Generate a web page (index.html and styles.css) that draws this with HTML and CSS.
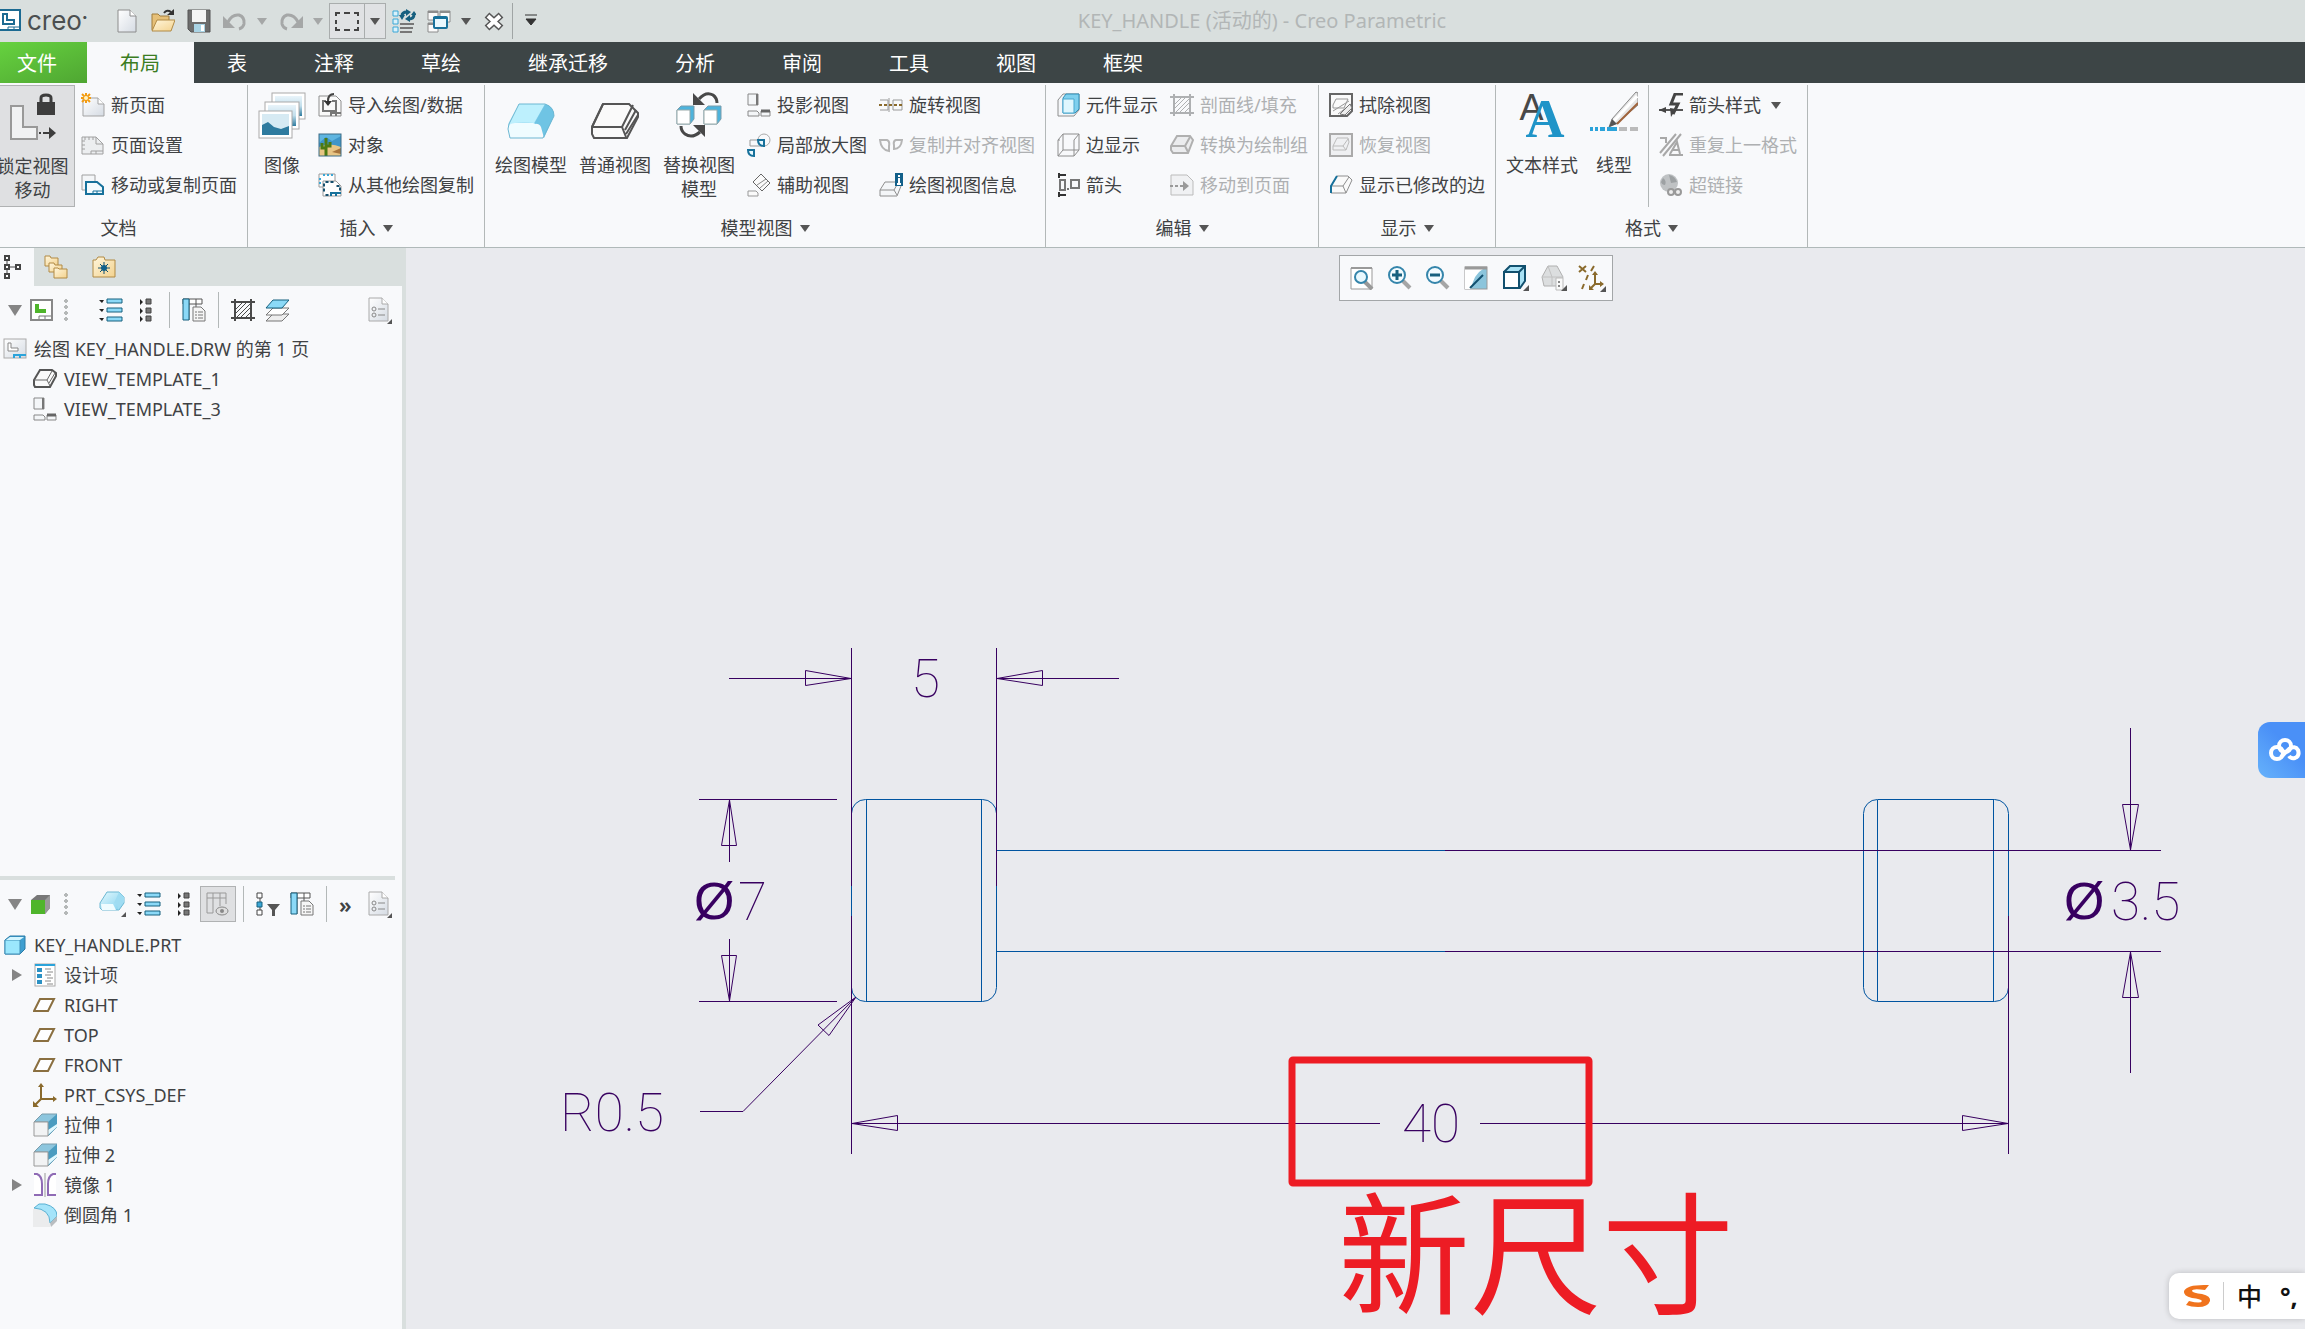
FILE: index.html
```html
<!DOCTYPE html>
<html lang="zh-CN">

<head>
    <meta charset="UTF-8">
    <meta name="viewport" content="width=device-width, initial-scale=1.0">
    <title>KEY_HANDLE (活动的) - Creo Parametric</title>
    <link rel="stylesheet" href="styles.css">
</head>

<body>
    <!-- icon sprite -->
    <svg class="sprite" aria-hidden="true">
        <defs>
            <linearGradient id="gBlue" x1="0" y1="0" x2="1" y2="1">
                <stop offset="0" stop-color="#e4f9fe" />
                <stop offset="1" stop-color="#7fd0ee" />
            </linearGradient>
            <linearGradient id="gGrey" x1="0" y1="0" x2="1" y2="1">
                <stop offset="0" stop-color="#ffffff" />
                <stop offset="1" stop-color="#d5dbe3" />
            </linearGradient>
            <linearGradient id="gFold" x1="0" y1="0" x2="1" y2="1">
                <stop offset="0" stop-color="#fff6dc" />
                <stop offset="1" stop-color="#f3d28e" />
            </linearGradient>
            <linearGradient id="gSea" x1="0" y1="0" x2="0" y2="1">
                <stop offset="0" stop-color="#e9f4fa" />
                <stop offset="0.5" stop-color="#c3dfec" />
                <stop offset="1" stop-color="#2e7b9f" />
            </linearGradient>
        </defs>

        <symbol id="i-app" viewBox="0 0 24 24">
            <path d="M-4 1H20V21H-4z" fill="#fff" stroke="#1c6a92" stroke-width="2" />
            <path d="M3 5H7V11H14V15H3z" fill="#fff" stroke="#1c6a92" stroke-width="2" />
            <path d="M8 21V18H20M14 18V21" fill="none" stroke="#1c6a92" />
        </symbol>
        <symbol id="i-new" viewBox="0 0 24 24">
            <path d="M3 1H15L21 7V23H3z" fill="url(#gGrey)" stroke="#8c8c8c" />
            <path d="M15 1V7H21" fill="#fff" stroke="#8c8c8c" />
        </symbol>
        <symbol id="i-open" viewBox="0 0 24 24">
            <path d="M1 21V5H7L9 7H18V11" fill="#e6c078" stroke="#a07c3c" />
            <path d="M1 22L6 11H24L20 22z" fill="url(#gFold)" stroke="#b18a45" />
            <path d="M13 4Q16 0 20 3" fill="none" stroke="#333" stroke-width="2" />
            <path d="M23 0V6H16z" fill="#333" />
        </symbol>
        <symbol id="i-save" viewBox="0 0 24 24">
            <path d="M1 1H23V23H4L1 20z" fill="#6c6c6c" stroke="#555" />
            <path d="M5 1H19V13H5z" fill="#f4f4f4" />
            <path d="M7 15H18V23H7z" fill="#a9d3e4" />
            <path d="M14 16H17V22H14z" fill="#fff" />
        </symbol>
        <symbol id="i-undo" viewBox="0 0 24 24">
            <path d="M5 13Q9 5 16 6Q22 8 21 15Q20 19 16 20" fill="none" stroke="#a5a7a7" stroke-width="3" />
            <path d="M0 7V19H12z" fill="#a5a7a7" />
        </symbol>
        <symbol id="i-redo" viewBox="0 0 24 24">
            <path d="M19 13Q15 5 8 6Q2 8 3 15Q4 19 8 20" fill="none" stroke="#a5a7a7" stroke-width="3" />
            <path d="M24 7V19H12z" fill="#a5a7a7" />
        </symbol>
        <symbol id="i-select" viewBox="0 0 24 24">
            <path d="M1 7V4H5M9 4H15M19 4H23V7M23 11V15M23 18V21H19M15 21H9M5 21H1V18M1 15V11" fill="none" stroke="#444" stroke-width="2" />
        </symbol>
        <symbol id="i-regen" viewBox="0 0 24 24">
            <path d="M1 2H6V7H1zM1 10H6V15H1zM1 18H6V23H1z" fill="#d9f1fb" stroke="#3ba7d6" stroke-width="1" />
            <path d="M8 15H22M8 19H21M8 23H20" stroke="#777" stroke-width="2" />
            <path d="M10 7Q10 3 15 3M22 5Q22 10 17 10" fill="none" stroke="#17607f" stroke-width="3" />
            <path d="M14 0V7L19 3zM18 6V13L13 10zM7 6H13L10 11zM19 6H25L22 2z" fill="#17607f" />
        </symbol>
        <symbol id="i-windows" viewBox="0 0 24 24">
            <path d="M1 2H11V11H1zM13 2H23V13H13zM1 14H11V23H1z" fill="#fafafa" stroke="#8c8c8c" />
            <path d="M1 3H11M13 3H23M1 15H11" stroke="#8c8c8c" stroke-width="2" />
            <rect x="7" y="8" width="13" height="11" rx="1" fill="#e8f8fe" stroke="#17719b" stroke-width="2" />
            <path d="M6 9H20" stroke="#17719b" stroke-width="2" />
        </symbol>
        <symbol id="i-close" viewBox="0 0 24 24">
            <path d="M5 6L19 19M19 6L5 19" stroke="#555" stroke-width="7" />
            <path d="M6 7L18 18M18 7L6 18" stroke="#fff" stroke-width="4" />
        </symbol>
        <symbol id="i-custom" viewBox="0 0 16 16">
            <path d="M2 2H14M3 6H13L8 12z" fill="#333" stroke="#333" stroke-width="1" />
        </symbol>

        <symbol id="i-lock" viewBox="2 0 48 48">
            <path d="M4 14H16V35H30V47H4z" fill="#f1f2f3" stroke="#999" stroke-width="2" />
            <path d="M30 10H48V23H30z" fill="#3d3d3d" />
            <path d="M34 11V6Q34 3 39 3Q44 3 44 6V11" fill="none" stroke="#3d3d3d" stroke-width="3" />
            <path d="M32 41H34M36 41H44" stroke="#3d3d3d" stroke-width="2" />
            <path d="M42 35L49 41L42 47z" fill="#3d3d3d" />
        </symbol>
        <symbol id="i-newpage" viewBox="0 0 24 24">
            <path d="M2 5H17L23 11V23H2z" fill="url(#gGrey)" stroke="#a3a3a3" />
            <path d="M17 5V11H23" fill="#fff" stroke="#a3a3a3" />
            <path d="M5 0V10M0 5H10M1 1L9 9M9 1L1 9" stroke="#f39c12" stroke-width="2" />
            <circle cx="5" cy="5" r="2" fill="#fff3c4" />
        </symbol>
        <symbol id="i-pageset" viewBox="0 0 24 24">
            <path d="M1 4H15L22 11V21H1z" fill="#eceef0" stroke="#a0a0a0" />
            <path d="M15 4V11H22M4 4V7M8 4V7M12 4V7M1 8H4M1 12H4M1 16H4M10 21V18H22M15 18V21" fill="none" stroke="#a0a0a0" />
        </symbol>
        <symbol id="i-movepage" viewBox="0 0 24 24">
            <path d="M1 2H14V17H1z" fill="#f4f6f8" stroke="#a0a0a0" />
            <path d="M5 9H16L22 14V21H5z" fill="#f4fbfe" stroke="#17719b" stroke-width="2" />
            <path d="M12 21V18H22M16 18V21" fill="none" stroke="#17719b" />
        </symbol>
        <symbol id="i-images" viewBox="0 0 48 48">
            <rect x="14" y="2" width="33" height="26" fill="#fff" stroke="#aaa" />
            <rect x="17" y="5" width="27" height="20" fill="url(#gSea)" />
            <rect x="7" y="11" width="34" height="27" fill="#fff" stroke="#aaa" />
            <rect x="10" y="14" width="28" height="21" fill="url(#gSea)" />
            <rect x="1" y="20" width="33" height="27" fill="#fff" stroke="#aaa" />
            <rect x="4" y="23" width="27" height="21" fill="#d6eaf3" />
            <path d="M4 34L10 31L16 36L23 38L31 35V44H4z" fill="#2e7b9f" />
        </symbol>
        <symbol id="i-import" viewBox="0 0 24 24">
            <path d="M1 3H18L23 8V23H1z" fill="#fafafa" stroke="#8e8e8e" />
            <path d="M8 8H5V18H18V8H14M13 23V20H23M18 20V23" fill="none" stroke="#777" stroke-width="2" />
            <path d="M16 1Q10 1 10 8" fill="none" stroke="#444" stroke-width="2" />
            <path d="M6 8H14L10 13z" fill="#333" />
        </symbol>
        <symbol id="i-cactus" viewBox="0 0 24 24">
            <rect x="1" y="1" width="22" height="22" fill="#5fb5e0" />
            <path d="M1 10L8 4L14 8L23 3V14H1z" fill="#3f95c8" />
            <path d="M1 14Q12 9 23 14V23H1z" fill="#e8c584" />
            <path d="M14 19L23 15V21z" fill="#a7743c" />
            <path d="M8 23V5M8 15H4V10M8 13H12V9" fill="none" stroke="#4c7a12" stroke-width="3" />
            <rect x="1" y="1" width="22" height="22" fill="none" stroke="#3c6c86" />
        </symbol>
        <symbol id="i-copydraw" viewBox="0 0 24 24">
            <path d="M1 1H17V14H1z" fill="#fff" stroke="#9a9a9a" />
            <path d="M1 6H3M1 10H3M6 1V3M10 1V3M14 1V3" stroke="#3ba7d6" stroke-width="2" />
            <path d="M5 8H18L23 13V23H5z" fill="#fff" stroke="#9a9a9a" />
            <path d="M5 12H7M5 17H7M9 8V10M14 8V10M20 12V14M9 23V21M21 16H23" stroke="#17506e" stroke-width="3" />
            <path d="M13 23V20H23M18 20V23" fill="none" stroke="#17719b" stroke-width="2" />
        </symbol>
        <symbol id="i-model" viewBox="0 0 48 48">
            <path d="M12 13H38L28 35H3Q0 36 2 31z" fill="url(#gBlue)" />
            <path d="M12 13H38L27 32Q8 30 2 34z" fill="#bdf0fd" />
            <path d="M38 13Q47 15 47 25L37 47L34 36Q32 32 27 33z" fill="#6fc4e4" />
            <path d="M1 38Q1 32 8 32H26Q35 34 34 47H3z" fill="#effcff" />
            <path d="M12 13H38Q47 16 47 25L36 47H3L1 38L2 33z" fill="none" stroke="#6cb7d2" stroke-width="1" />
        </symbol>
        <symbol id="i-general" viewBox="0 0 48 48">
            <path d="M12 13H38L47 22V26L36 47H3L1 43V36z" fill="#fafafa" stroke="#555" stroke-width="2" />
            <path d="M1 36H31L35 46M31 36L42 14M35 43L47 24M34 39L45 19M12 13L1 36" fill="none" stroke="#555" stroke-width="2" />
        </symbol>
        <symbol id="i-replace" viewBox="0 0 48 48">
            <path d="M2 19L6 15H19V28L15 33H2z" fill="#4db3dc" stroke="#7a9cab" />
            <path d="M2 19H15V33H2z" fill="#fff" stroke="#9aa" />
            <path d="M29 19L33 15H46V28L42 33H29z" fill="#4db3dc" stroke="#7a9cab" />
            <path d="M29 19H42V33H29z" fill="#fff" stroke="#9aa" />
            <path d="M24 8Q31 0 38 4Q42 7 42 12M25 41Q17 48 10 43Q6 40 6 35" fill="none" stroke="#484848" stroke-width="3" />
            <path d="M18 2V14H30zM30 46V34H18z" fill="#484848" />
        </symbol>
        <symbol id="i-proj" viewBox="0 0 24 24">
            <path d="M1 1H11V12H1z" fill="#f4f6f8" stroke="#888" stroke-width="1" />
            <path d="M10 1V12" stroke="#777" stroke-width="2" />
            <path d="M1 18H10L12 20V23H1zM14 18H23V23H14z" fill="#f4f6f8" stroke="#888" />
            <path d="M14 18H23" stroke="#666" stroke-width="3" />
        </symbol>
        <symbol id="i-detail" viewBox="0 0 24 24">
            <circle cx="17" cy="7" r="6" fill="none" stroke="#aaa" />
            <path d="M3 7H15V13H3z" fill="none" stroke="#999" />
            <path d="M11 7H17V13Q11 13 11 7z" fill="#e8f8fe" stroke="#17719b" stroke-width="2" />
            <path d="M1 17H7V23Q1 23 1 17z" fill="#e8f8fe" stroke="#17719b" stroke-width="2" />
        </symbol>
        <symbol id="i-aux" viewBox="0 0 24 24">
            <path d="M14 1L23 10L15 18L6 9z" fill="#fafafa" stroke="#666" />
            <path d="M10 12L19 6M13 15L21 8" stroke="#888" />
            <path d="M1 18H9L11 20V23H1z" fill="#fafafa" stroke="#999" />
        </symbol>
        <symbol id="i-revolve" viewBox="0 0 24 24">
            <path d="M1 7H9V17H1M10 5V19M14 7H23V17H14z" fill="none" stroke="#999" />
            <path d="M0 12H24" stroke="#8a6a2c" stroke-width="2" stroke-dasharray="3 2" />
        </symbol>
        <symbol id="i-align" viewBox="0 0 24 24">
            <path d="M1 7H8Q11 8 10 13V18Q2 17 1 7zM23 7H17Q14 8 15 12V16Q22 16 23 7z" fill="none" stroke="#b5b5b5" stroke-width="2" />
        </symbol>
        <symbol id="i-info" viewBox="0 0 24 24">
            <path d="M6 9H20L22 13L18 23H1V17z" fill="#f4f6f8" stroke="#8e8e8e" />
            <path d="M1 17H15L18 22M15 17L19 10" fill="none" stroke="#8e8e8e" />
            <path d="M16 0H24V13H16z" fill="#12608a" />
            <path d="M20 2V4M19 6H20V11M18 11H22" fill="none" stroke="#fff" stroke-width="2" />
        </symbol>
        <symbol id="i-compdisp" viewBox="0 0 24 24">
            <path d="M2 7L7 1H23V17L18 23H2z" fill="#f4f6f8" stroke="#8e8e8e" />
            <path d="M7 5L10 1H23V16L19 20H7z" fill="#7fd0ee" stroke="#2e8fb8" />
            <path d="M7 6H18V20H7z" fill="#dff7fe" stroke="#4aa9d0" />
        </symbol>
        <symbol id="i-edge" viewBox="0 0 24 24">
            <path d="M2 7L7 1H23V17L18 23H2zM7 1V17H23M7 17L2 23M18 23V7L23 1M2 7H4" fill="none" stroke="#8e8e8e" />
        </symbol>
        <symbol id="i-arrows" viewBox="0 0 24 24">
            <path d="M3 2H10M3 22H10M3 0V5M3 19V24" stroke="#333" stroke-width="2" />
            <path d="M4 7H9V17H4zM15 7H23V15H15z" fill="none" stroke="#777" stroke-width="2" />
            <path d="M11 16H13" stroke="#777" stroke-width="2" />
        </symbol>
        <symbol id="i-hatch" viewBox="0 0 24 24">
            <path d="M4 1V23M20 1V23M0 4H24M0 20H24" stroke="currentColor" stroke-width="2" />
            <path d="M5 11L11 5M5 15L15 5M6 19L19 6M10 19L19 10M15 19L19 15" stroke="currentColor" />
        </symbol>
        <symbol id="i-convert" viewBox="0 0 24 24">
            <path d="M7 3H20L23 7L18 20H3L1 17V13z" fill="#ebecee" stroke="#b0b0b0" stroke-width="2" />
            <path d="M1 13H15L18 19M15 13L20 4" fill="none" stroke="#b0b0b0" stroke-width="2" />
        </symbol>
        <symbol id="i-topage" viewBox="0 0 24 24">
            <path d="M1 2H17L23 8V22H1z" fill="#f0f1f3" stroke="#bbb" />
            <path d="M0 13H3M5 13H8M10 13H16" stroke="#999" stroke-width="2" />
            <path d="M13 8L19 13L13 18z" fill="#999" />
        </symbol>
        <symbol id="i-erase" viewBox="0 0 24 24">
            <path d="M1 1H23V18L18 23H1z" fill="#fafafa" stroke="#666" stroke-width="2" />
            <path d="M7 6H19L15 15H4V12zM4 18L20 8M9 21L22 11" fill="none" stroke="#999" stroke-width="1" />
            <path d="M11 21L21 11L23 15L16 22z" fill="#eee" stroke="#777" />
        </symbol>
        <symbol id="i-restore" viewBox="0 0 24 24">
            <rect x="1" y="1" width="22" height="22" fill="#eff0f2" stroke="#aaa" stroke-width="2" />
            <path d="M8 5H19L20 9L17 17H4V13zM4 13H14L17 17M14 13L19 6" fill="none" stroke="#bbb" stroke-width="1" />
        </symbol>
        <symbol id="i-moded" viewBox="0 0 24 24">
            <path d="M8 3H19L23 7L17 20H2V13z" fill="#fafafa" stroke="#8e8e8e" />
            <path d="M2 13H14L17 20M14 13L20 4" fill="none" stroke="#8e8e8e" />
            <path d="M8 3L2 13V20" fill="none" stroke="#17719b" stroke-width="2" />
        </symbol>
        <symbol id="i-pen" viewBox="0 0 48 48">
            <path d="M46 1L48 2V14L27 32L19 36L22 28z" fill="#e6e6e6" stroke="#888" />
            <path d="M47 5L24 30" stroke="#fff" stroke-width="3" />
            <path d="M48 12L27 33" stroke="#a0643c" stroke-width="2" />
            <path d="M19 36L22 28L27 33z" fill="#555" />
            <path d="M0 38H3M5 38H8M10 38H15M17 38H27" stroke="#2ba3da" stroke-width="4" />
            <path d="M29 38H37M40 38H48" stroke="#bbb" stroke-width="4" />
        </symbol>
        <symbol id="i-arrstyle" viewBox="0 0 24 24">
            <path d="M0 17H24" stroke="#555" stroke-width="2" />
            <path d="M24 1H16L12 11H19L14 21" fill="none" stroke="#444" stroke-width="3" />
            <path d="M17 16L12 24L11 15z" fill="#444" />
            <path d="M0 17L7 14V20z" fill="#444" />
        </symbol>
        <symbol id="i-repeat" viewBox="0 0 24 24">
            <path d="M4 23L22 1M1 20L17 1M1 5H7V10" fill="none" stroke="#a8a8a8" stroke-width="2" />
            <path d="M11 21L18 9L21 21M13 17H20M10 22H24" fill="none" stroke="#a8a8a8" stroke-width="2" />
        </symbol>
        <symbol id="i-link" viewBox="0 0 24 24">
            <circle cx="10" cy="10" r="9" fill="#bfc2c4" />
            <path d="M4 5Q8 8 6 12Q3 12 2 9zM10 2Q16 3 18 9L12 10z" fill="#9da1a3" />
            <circle cx="12" cy="19" r="3" fill="#eee" stroke="#999" stroke-width="2" />
            <circle cx="19" cy="19" r="3" fill="#eee" stroke="#999" stroke-width="2" />
        </symbol>

        <symbol id="i-refit" viewBox="0 0 24 24">
            <path d="M1 2H22V23H1z" fill="#fff" stroke="#999" />
            <path d="M1 2H22" stroke="#999" stroke-width="2" />
            <path d="M15 16L22 23" stroke="#999" stroke-width="4" />
            <circle cx="11" cy="11" r="6" fill="#e8f8fe" stroke="#3585ab" stroke-width="2" />
        </symbol>
        <symbol id="i-zoomin" viewBox="0 0 24 24">
            <path d="M14 14L22 22" stroke="#a5a5a5" stroke-width="4" />
            <circle cx="9" cy="9" r="8" fill="#f2fbff" stroke="#3585ab" stroke-width="2" />
            <path d="M9 4V14M4 9H14" stroke="#17607f" stroke-width="3" />
        </symbol>
        <symbol id="i-zoomout" viewBox="0 0 24 24">
            <path d="M14 14L22 22" stroke="#a5a5a5" stroke-width="4" />
            <circle cx="9" cy="9" r="8" fill="#f2fbff" stroke="#3585ab" stroke-width="2" />
            <path d="M4 9H14" stroke="#17607f" stroke-width="3" />
        </symbol>
        <symbol id="i-repaint" viewBox="0 0 24 24">
            <rect x="1" y="1" width="22" height="22" fill="#8cc5dc" stroke="#999" />
            <path d="M1 3H19Q10 8 7 23H1z" fill="#fff" />
            <path d="M1 2H23" stroke="#999" stroke-width="3" />
            <path d="M6 22L19 9" stroke="#12506e" stroke-width="2" />
        </symbol>
        <symbol id="i-box" viewBox="0 0 28 28">
            <path d="M2 8L8 2H23V17L18 24H2z" fill="#a9e2f5" stroke="#12506e" stroke-width="2" />
            <path d="M2 8H17V24H2z" fill="#fff" stroke="#12506e" stroke-width="2" />
            <path d="M17 8L23 2" stroke="#12506e" stroke-width="2" />
            <path d="M27 21V27H21z" fill="#555" />
        </symbol>
        <symbol id="i-house" viewBox="0 0 28 28">
            <path d="M2 13L8 2H17L23 13L20 22H4z" fill="#dcdedf" stroke="#b0b0b0" />
            <path d="M8 2L12 13V22M2 13H23" fill="none" stroke="#c2c2c2" />
            <path d="M16 14H23V26H16z" fill="#fafafa" stroke="#bbb" />
            <path d="M19 17V19M19 21V23" stroke="#888" stroke-width="2" />
            <path d="M27 21V27H21z" fill="#555" />
        </symbol>
        <symbol id="i-datum" viewBox="0 0 28 28">
            <path d="M1 2L8 8M8 2L1 8M16 2L13 7M10 11L8 16M6 20L4 25M17 9V20H25M17 20L12 25" fill="none" stroke="#8a6a2c" stroke-width="2" />
            <path d="M14 11L17 7L20 11zM22 17L26 20L22 23zM11 21V26H16z" fill="#8a6a2c" />
            <path d="M28 22V28H22z" fill="#555" />
        </symbol>

        <symbol id="i-treetab" viewBox="0 0 24 24">
            <path d="M4 6V19M6 12H14" stroke="#444" />
            <path d="M2 1H6V5H2zM2 10H6V14H2zM2 19H6V23H2zM13 10H17V14H13z" fill="#fff" stroke="#444" stroke-width="2" />
        </symbol>
        <symbol id="i-folders" viewBox="0 0 24 24">
            <path d="M1 1H6L7 3H14V11H1z" fill="url(#gFold)" stroke="#b18a45" />
            <path d="M5 8H10L11 10H18V17H5z" fill="url(#gFold)" stroke="#b18a45" />
            <path d="M10 13H14L15 14H23V23H10z" fill="url(#gFold)" stroke="#b18a45" />
        </symbol>
        <symbol id="i-fav" viewBox="0 0 24 24">
            <path d="M1 5H4L6 2H12L13 5H23V22H1z" fill="url(#gFold)" stroke="#b18a45" />
            <path d="M12 7V19M6 13H18M8 9L16 17M16 9L8 17" stroke="#12506e" stroke-width="1" />
            <circle cx="12" cy="13" r="3" fill="#12608a" />
        </symbol>
        <symbol id="i-drawgreen" viewBox="0 0 24 24">
            <rect x="1" y="2" width="21" height="20" fill="#fff" stroke="#888" stroke-width="2" />
            <path d="M5 6H9V11H16V15H5z" fill="#4fb52b" />
            <path d="M9 21V18H21M15 18V21" fill="none" stroke="#777" />
        </symbol>
        <symbol id="i-expand" viewBox="0 0 24 24">
            <path d="M8 1H23V5H8zM8 10H23V14H8zM8 19H23V23H8z" fill="#8bd9f7" stroke="#17607f" />
            <path d="M0 2H5L3 5zM0 11H5L3 14zM0 20H5L3 23z" fill="#222" />
        </symbol>
        <symbol id="i-collapse" viewBox="0 0 24 24">
            <path d="M13 1H18V6H13zM13 10H18V15H13zM13 18H18V23H13z" fill="#777" stroke="#444" />
            <path d="M7 1L10 4L7 7zM7 10L10 13L7 16zM7 18L10 21L7 24z" fill="#222" />
        </symbol>
        <symbol id="i-columns" viewBox="0 0 24 24">
            <path d="M1 1H20V6H1zM7 1V6M14 1V12M7 6V22" fill="#fff" stroke="#555" stroke-width="1" />
            <path d="M1 1H7V22H1z" fill="#8bd9f7" stroke="#17607f" />
            <path d="M11 9H19L23 13V23H11z" fill="#f6f6f6" stroke="#777" />
            <path d="M13 14H15M13 17H15M13 20H15M16 14H21M16 17H21M16 20H21" stroke="#777" />
        </symbol>
        <symbol id="i-layers" viewBox="0 0 24 24">
            <path d="M1 23L8 16H24L17 23z" fill="#eee" stroke="#777" />
            <path d="M1 17L8 10H24L17 17z" fill="#fff" stroke="#777" />
            <path d="M1 10L8 2H24L17 10z" fill="#8bd9f7" stroke="#17607f" />
        </symbol>
        <symbol id="i-settings" viewBox="0 0 26 28">
            <path d="M1 2H14L20 8V25H1z" fill="url(#gGrey)" stroke="#aaa" />
            <path d="M14 2V8H20" fill="#fff" stroke="#aaa" />
            <circle cx="6" cy="13" r="2" fill="none" stroke="#888" />
            <circle cx="6" cy="19" r="2" fill="none" stroke="#888" />
            <path d="M10 13H17M10 19H17" stroke="#888" />
            <path d="M24 23V28H19z" fill="#555" />
        </symbol>
        <symbol id="i-drawroot" viewBox="0 0 24 24">
            <rect x="1" y="2" width="22" height="19" fill="url(#gGrey)" stroke="#aaa" stroke-width="1" />
            <path d="M5 6H8V11H15V14H5z" fill="#fff" stroke="#888" />
            <path d="M11 21V18H23M17 18V21" fill="none" stroke="#2ba3da" stroke-width="2" />
        </symbol>
        <symbol id="i-view" viewBox="0 0 24 24">
            <path d="M7 3H19L23 6V9L17 20H2L1 18V13z" fill="#fafafa" stroke="#555" stroke-width="2" />
            <path d="M1 13H14L17 19M14 13L19 4M16 16L22 6" fill="none" stroke="#666" stroke-width="1" />
        </symbol>
        <symbol id="i-cubegreen" viewBox="0 0 24 24">
            <path d="M1 8L7 3H20V16L15 22z" fill="#777" />
            <path d="M20 3V16L15 22V8z" fill="#999" />
            <path d="M1 8H15V22H1z" fill="#4fb52b" />
        </symbol>
        <symbol id="i-solid" viewBox="0 0 28 28">
            <path d="M8 2H20L25 7V13L20 20H3L1 18V13z" fill="url(#gBlue)" stroke="#6cb7d2" />
            <path d="M1 13H15Q19 14 19 20L25 12V7L20 2L15 13z" fill="#9fdcf2" />
            <path d="M2 14H14L17 20H3z" fill="#effcff" />
            <path d="M27 22V27H22z" fill="#555" />
        </symbol>
        <symbol id="i-colvis" viewBox="0 0 24 24">
            <path d="M1 1H20V6H1zM1 6V21H7V1M14 1V14M20 6V12" fill="none" stroke="#999" stroke-width="1" />
            <ellipse cx="16" cy="19" rx="6" ry="4" fill="#ddd" stroke="#888" />
            <circle cx="16" cy="19" r="2" fill="#888" />
        </symbol>
        <symbol id="i-filter" viewBox="0 0 24 24">
            <path d="M4 6V19" stroke="#444" />
            <path d="M1 1H6V6H1zM1 18H6V23H1z" fill="#fff" stroke="#444" />
            <path d="M1 10H6V15H1z" fill="#3ba7d6" stroke="#17607f" />
            <path d="M11 12H24L19 18V24H16V18z" fill="#555" />
        </symbol>
        <symbol id="i-part" viewBox="0 0 24 24">
            <path d="M2 7L7 3H22V16L17 21H2z" fill="#3f9fd0" stroke="#2b7ba6" />
            <path d="M2 7H17V21H2z" fill="#9be7fd" stroke="#3f8fb8" />
            <path d="M3 7L7 4H21L17 7z" fill="#d4f6ff" />
        </symbol>
        <symbol id="i-design" viewBox="0 0 24 24">
            <rect x="2" y="1" width="20" height="22" fill="#fff" stroke="#aaa" />
            <path d="M2 2H22" stroke="#2ba3da" stroke-width="2" />
            <path d="M4 5H9V9H4zM4 11H9V15H4zM4 17H9V21H4z" fill="#2b91c4" />
            <path d="M12 6H18M14 9H20M12 12H18M14 15H20M12 18H18M14 21H20" stroke="#888" />
        </symbol>
        <symbol id="i-plane" viewBox="0 0 24 24">
            <path d="M7 6H21L15 18H1z" fill="#fff" stroke="#8a6f40" stroke-width="2" />
        </symbol>
        <symbol id="i-csys" viewBox="0 0 24 24">
            <path d="M8 3V16H22M8 16L2 22" fill="none" stroke="#8a6a2c" stroke-width="2" />
            <path d="M5 4L8 0L11 4zM20 13L24 16L20 19zM0 18V24H6z" fill="#8a6a2c" />
        </symbol>
        <symbol id="i-extrude" viewBox="0 0 24 24">
            <path d="M1 9L9 1H24V14L15 23V9z" fill="#8dc6de" stroke="#7a9cab" />
            <path d="M15 9L24 1V14L15 23z" fill="#4a9cc0" />
            <path d="M15 22V17L24 11V14z" fill="#e0f8ff" />
            <path d="M1 9H15V23H1z" fill="#f2f3f4" stroke="#999" />
        </symbol>
        <symbol id="i-mirror" viewBox="0 0 24 24">
            <path d="M1 1H4Q9 3 9 11V22H1M23 1H20Q15 3 15 11V22H23" fill="#fff" stroke="#8f6bb5" stroke-width="2" />
            <path d="M12 0V24" stroke="#999" />
        </symbol>
        <symbol id="i-round" viewBox="0 0 24 24">
            <path d="M0 6H4Q17 7 17 22V24H0z" fill="#ebeced" />
            <path d="M1 5L6 1H12Q24 4 24 13L17 20Q17 6 1 5z" fill="#a5e4fa" stroke="#58b0d2" />
            <path d="M17 20L24 13V18L18 24z" fill="#b9bdc0" />
        </symbol>
    </svg>

    <header class="titlebar">
        <svg class="icon"><use href="#i-app" /></svg>
        <span class="brand">creo<sup>•</sup></span>
        <div class="quick">
            <button type="button" aria-label="新建"><svg class="icon"><use href="#i-new" /></svg></button>
            <button type="button" aria-label="打开"><svg class="icon"><use href="#i-open" /></svg></button>
            <button type="button" aria-label="保存"><svg class="icon"><use href="#i-save" /></svg></button>
            <button type="button" aria-label="撤消" class="split"><svg class="icon"><use href="#i-undo" /></svg><i class="caret light"></i></button>
            <button type="button" aria-label="重做" class="split"><svg class="icon"><use href="#i-redo" /></svg><i class="caret light"></i></button>
        </div>
        <button type="button" class="pick" aria-label="选择"><span><svg class="icon"><use href="#i-select" /></svg></span><i class="caret"></i></button>
        <div class="quick second">
            <button type="button" aria-label="重新生成"><svg class="icon"><use href="#i-regen" /></svg></button>
            <button type="button" aria-label="窗口" class="split"><svg class="icon"><use href="#i-windows" /></svg><i class="caret"></i></button>
            <button type="button" aria-label="关闭"><svg class="icon"><use href="#i-close" /></svg></button>
        </div>
        <button type="button" class="custom" aria-label="自定义"><svg class="icon tiny"><use href="#i-custom" /></svg></button>
        <h1 class="title">KEY_HANDLE (活动的) - Creo Parametric</h1>
    </header>

    <nav class="tabs">
        <button type="button" class="tab file">文件</button>
        <button type="button" class="tab active">布局</button>
        <button type="button" class="tab">表</button>
        <button type="button" class="tab">注释</button>
        <button type="button" class="tab">草绘</button>
        <button type="button" class="tab">继承迁移</button>
        <button type="button" class="tab">分析</button>
        <button type="button" class="tab">审阅</button>
        <button type="button" class="tab">工具</button>
        <button type="button" class="tab">视图</button>
        <button type="button" class="tab">框架</button>
    </nav>

    <section class="ribbon">
        <div class="group first">
            <div class="tools">
                <button type="button" class="big pressed"><svg class="icon large"><use href="#i-lock" /></svg><span>锁定视图<br>移动</span></button>
                <div class="col">
                    <button type="button" class="small"><svg class="icon"><use href="#i-newpage" /></svg>新页面</button>
                    <button type="button" class="small"><svg class="icon"><use href="#i-pageset" /></svg>页面设置</button>
                    <button type="button" class="small"><svg class="icon"><use href="#i-movepage" /></svg>移动或复制页面</button>
                </div>
            </div>
            <div class="caption">文档</div>
        </div>

        <div class="group">
            <div class="tools">
                <button type="button" class="big narrow"><svg class="icon large"><use href="#i-images" /></svg><span>图像</span></button>
                <div class="col">
                    <button type="button" class="small"><svg class="icon"><use href="#i-import" /></svg>导入绘图/数据</button>
                    <button type="button" class="small"><svg class="icon"><use href="#i-cactus" /></svg>对象</button>
                    <button type="button" class="small"><svg class="icon"><use href="#i-copydraw" /></svg>从其他绘图复制</button>
                </div>
            </div>
            <button type="button" class="caption">插入<i class="caret"></i></button>
        </div>

        <div class="group">
            <div class="tools">
                <button type="button" class="big"><svg class="icon large"><use href="#i-model" /></svg><span>绘图模型</span></button>
                <button type="button" class="big"><svg class="icon large"><use href="#i-general" /></svg><span>普通视图</span></button>
                <button type="button" class="big"><svg class="icon large"><use href="#i-replace" /></svg><span>替换视图<br>模型</span></button>
                <div class="col">
                    <button type="button" class="small"><svg class="icon"><use href="#i-proj" /></svg>投影视图</button>
                    <button type="button" class="small"><svg class="icon"><use href="#i-detail" /></svg>局部放大图</button>
                    <button type="button" class="small"><svg class="icon"><use href="#i-aux" /></svg>辅助视图</button>
                </div>
                <div class="col">
                    <button type="button" class="small"><svg class="icon"><use href="#i-revolve" /></svg>旋转视图</button>
                    <button type="button" class="small" disabled><svg class="icon"><use href="#i-align" /></svg>复制并对齐视图</button>
                    <button type="button" class="small"><svg class="icon"><use href="#i-info" /></svg>绘图视图信息</button>
                </div>
            </div>
            <button type="button" class="caption">模型视图<i class="caret"></i></button>
        </div>

        <div class="group">
            <div class="tools">
                <div class="col">
                    <button type="button" class="small"><svg class="icon"><use href="#i-compdisp" /></svg>元件显示</button>
                    <button type="button" class="small"><svg class="icon"><use href="#i-edge" /></svg>边显示</button>
                    <button type="button" class="small"><svg class="icon"><use href="#i-arrows" /></svg>箭头</button>
                </div>
                <div class="col">
                    <button type="button" class="small" disabled><svg class="icon"><use href="#i-hatch" /></svg>剖面线/填充</button>
                    <button type="button" class="small" disabled><svg class="icon"><use href="#i-convert" /></svg>转换为绘制组</button>
                    <button type="button" class="small" disabled><svg class="icon"><use href="#i-topage" /></svg>移动到页面</button>
                </div>
            </div>
            <button type="button" class="caption">编辑<i class="caret"></i></button>
        </div>

        <div class="group">
            <div class="tools">
                <div class="col">
                    <button type="button" class="small"><svg class="icon"><use href="#i-erase" /></svg>拭除视图</button>
                    <button type="button" class="small" disabled><svg class="icon"><use href="#i-restore" /></svg>恢复视图</button>
                    <button type="button" class="small"><svg class="icon"><use href="#i-moded" /></svg>显示已修改的边</button>
                </div>
            </div>
            <button type="button" class="caption">显示<i class="caret"></i></button>
        </div>

        <div class="group">
            <div class="tools">
                <button type="button" class="big"><span class="letters" aria-hidden="true"><b>A</b><b class="serif">A</b></span><span>文本样式</span></button>
                <button type="button" class="big narrow"><svg class="icon large"><use href="#i-pen" /></svg><span>线型</span></button>
                <div class="col ruled">
                    <button type="button" class="small"><svg class="icon"><use href="#i-arrstyle" /></svg>箭头样式<i class="caret"></i></button>
                    <button type="button" class="small" disabled><svg class="icon"><use href="#i-repeat" /></svg>重复上一格式</button>
                    <button type="button" class="small" disabled><svg class="icon"><use href="#i-link" /></svg>超链接</button>
                </div>
            </div>
            <button type="button" class="caption">格式<i class="caret"></i></button>
        </div>
    </section>

    <main class="work">
        <aside class="side">
            <section class="pane drawing-pane">
                <div class="side-tabs">
                    <button type="button" class="side-tab on" aria-label="模型树"><svg class="icon"><use href="#i-treetab" /></svg></button>
                    <button type="button" class="side-tab" aria-label="文件夹浏览器"><svg class="icon"><use href="#i-folders" /></svg></button>
                    <button type="button" class="side-tab" aria-label="收藏夹"><svg class="icon"><use href="#i-fav" /></svg></button>
                </div>
                <div class="side-tools">
                    <i class="caret wide"></i>
                    <svg class="icon"><use href="#i-drawgreen" /></svg>
                    <i class="grip"></i>
                    <button type="button" class="gap-left" aria-label="全部展开"><svg class="icon"><use href="#i-expand" /></svg></button>
                    <button type="button" aria-label="全部折叠"><svg class="icon"><use href="#i-collapse" /></svg></button>
                    <i class="rule"></i>
                    <button type="button" aria-label="树列"><svg class="icon"><use href="#i-columns" /></svg></button>
                    <i class="rule"></i>
                    <button type="button" aria-label="剖面线"><svg class="icon dark"><use href="#i-hatch" /></svg></button>
                    <button type="button" aria-label="层"><svg class="icon"><use href="#i-layers" /></svg></button>
                    <button type="button" class="last" aria-label="设置"><svg class="icon cornered"><use href="#i-settings" /></svg></button>
                </div>
                <ul class="tree">
                    <li class="root"><svg class="icon"><use href="#i-drawroot" /></svg>绘图 KEY_HANDLE.DRW 的第 1 页</li>
                    <li><svg class="icon"><use href="#i-view" /></svg>VIEW_TEMPLATE_1</li>
                    <li><svg class="icon"><use href="#i-proj" /></svg>VIEW_TEMPLATE_3</li>
                </ul>
            </section>

            <section class="pane">
                <div class="side-tools">
                    <i class="caret wide"></i>
                    <svg class="icon"><use href="#i-cubegreen" /></svg>
                    <i class="grip"></i>
                    <button type="button" class="gap-left" aria-label="显示样式"><svg class="icon cornered"><use href="#i-solid" /></svg></button>
                    <button type="button" aria-label="全部展开"><svg class="icon"><use href="#i-expand" /></svg></button>
                    <button type="button" aria-label="全部折叠"><svg class="icon"><use href="#i-collapse" /></svg></button>
                    <button type="button" class="held" aria-label="列显示"><svg class="icon"><use href="#i-colvis" /></svg></button>
                    <i class="rule"></i>
                    <button type="button" aria-label="过滤器"><svg class="icon"><use href="#i-filter" /></svg></button>
                    <button type="button" aria-label="树列"><svg class="icon"><use href="#i-columns" /></svg></button>
                    <i class="rule"></i>
                    <button type="button" class="more">»</button>
                    <button type="button" class="last" aria-label="设置"><svg class="icon cornered"><use href="#i-settings" /></svg></button>
                </div>
                <ul class="tree">
                    <li class="root"><svg class="icon"><use href="#i-part" /></svg>KEY_HANDLE.PRT</li>
                    <li class="parent"><svg class="icon"><use href="#i-design" /></svg>设计项</li>
                    <li><svg class="icon"><use href="#i-plane" /></svg>RIGHT</li>
                    <li><svg class="icon"><use href="#i-plane" /></svg>TOP</li>
                    <li><svg class="icon"><use href="#i-plane" /></svg>FRONT</li>
                    <li><svg class="icon"><use href="#i-csys" /></svg>PRT_CSYS_DEF</li>
                    <li><svg class="icon"><use href="#i-extrude" /></svg>拉伸 1</li>
                    <li><svg class="icon"><use href="#i-extrude" /></svg>拉伸 2</li>
                    <li class="parent"><svg class="icon"><use href="#i-mirror" /></svg>镜像 1</li>
                    <li><svg class="icon"><use href="#i-round" /></svg>倒圆角 1</li>
                </ul>
            </section>
        </aside>

        <div class="canvas">
            <div class="view-tools">
                <button type="button" aria-label="重新调整"><svg class="icon"><use href="#i-refit" /></svg></button>
                <button type="button" aria-label="放大"><svg class="icon"><use href="#i-zoomin" /></svg></button>
                <button type="button" aria-label="缩小"><svg class="icon"><use href="#i-zoomout" /></svg></button>
                <button type="button" aria-label="重画"><svg class="icon"><use href="#i-repaint" /></svg></button>
                <button type="button" aria-label="显示样式"><svg class="icon cornered"><use href="#i-box" /></svg></button>
                <button type="button" aria-label="透视图"><svg class="icon cornered"><use href="#i-house" /></svg></button>
                <button type="button" aria-label="基准显示"><svg class="icon cornered"><use href="#i-datum" /></svg></button>
            </div>

            <svg class="sheet" viewBox="406 248 1899 1081" preserveAspectRatio="xMinYMin meet">
                <!-- part geometry -->
                <g class="part">
                    <rect x="851.5" y="799.5" width="145" height="202" rx="14" />
                    <path d="M866.5 800V1001M981.5 800V1001" />
                    <rect x="1863.5" y="799.5" width="145" height="202" rx="14" />
                    <path d="M1877.5 800V1001M1993.5 800V1001" />
                    <path d="M997 850.5H1445M997 951.5H1445" />
                </g>

                <!-- dimension lines -->
                <g class="dim">
                    <path d="M851.5 648V886M851.5 916V1154M996.5 648V886" />
                    <path d="M729 678.5H851M997 678.5H1119" />
                    <path d="M851 678.5L805.5 670.5V685.5zM997 678.5L1042.5 670.5V685.5z" />

                    <path d="M699 799.5H837M699 1001.5H837M729.5 800V862M729.5 939V1001" />
                    <path d="M729.5 800L721.5 845.5H736.5zM729.5 1001L721.5 955.5H736.5z" />

                    <path d="M700 1111.5H743L856 997" />
                    <path d="M856 997L818 1025L829 1035.5z" />

                    <path d="M852 1123.5H1380M1480 1123.5H2008M2008.5 916V1154" />
                    <path d="M852 1123.5L897.5 1115.5V1130.5zM2008 1123.5L1962.5 1115.5V1130.5z" />

                    <path d="M1445 850.5H2161M1445 951.5H2161M2130.5 728V850M2130.5 952V1073" />
                    <path d="M2130.5 850L2122.5 804.5H2138.5zM2130.5 952L2122.5 997.5H2138.5z" />
                </g>

                <g class="value">
                    <text x="911" y="697">5</text>
                    <text x="694" y="919"><tspan class="dia">Ø</tspan></text>
                    <text x="738" y="920">7</text>
                    <text x="560" y="1131">R0.5</text>
                    <text x="1402" y="1142">40</text>
                    <text x="2064" y="919"><tspan class="dia">Ø</tspan></text>
                    <text x="2111" y="920">3.5</text>
                </g>

                <rect class="mark" x="1292" y="1060" width="297" height="123" rx="1" />
                <text class="note" x="1338" y="1304">新尺寸</text>
            </svg>

            <button type="button" class="cloud" aria-label="网盘">
                <svg viewBox="0 0 32 24">
                    <circle cx="8" cy="15" r="6" />
                    <circle cx="16" cy="8" r="6" />
                    <path d="M12 19L20 11Q26 7 29 12Q31 18 26 20Q22 21 20 18" />
                </svg>
            </button>

            <div class="ime">
                <svg class="sogou" viewBox="0 0 28 24"><path d="M26 1L22 6Q9 4 9 7Q10 9 19 10Q28 12 27 17Q25 23 15 23Q8 23 3 21L6 17Q18 20 19 17Q18 15 9 14Q0 12 1 7Q4 0 26 1z" /></svg>
                <button type="button">中</button>
                <button type="button" class="punct">°,</button>
            </div>
        </div>
    </main>
</body>

</html>
```
FILE: styles.css
```css
* {
    box-sizing: border-box;
}

body {
    margin: 0;
    height: 100vh;
    display: flex;
    flex-direction: column;
    font-family: "Noto Sans", "Noto Sans CJK SC", sans-serif;
    font-size: 18px;
    line-height: 24px;
    color: #404244;
    background-color: #e9eaee;
    overflow: hidden;
}

button {
    font: inherit;
    color: inherit;
    background: none;
    border: none;
    padding: 0;
    white-space: nowrap;
    cursor: pointer;
}

.sprite {
    position: absolute;
    width: 0;
    height: 0;
}

.icon {
    display: block;
    flex: none;
    width: 24px;
    height: 24px;
}

.icon.large {
    width: 48px;
    height: 48px;
}

.icon.tiny {
    width: 16px;
    height: 16px;
}

.icon.cornered {
    width: 28px;
    height: 28px;
}

.icon.dark {
    color: #4a4a4a;
}

.caret {
    flex: none;
    border: 5px solid transparent;
    border-top: 7px solid #555;
    border-bottom: none;
}

.caret.light {
    border-top-color: #a5a7a7;
}

.caret.wide {
    margin-right: -2px;
    border-width: 11px 7px 0;
    border-top-color: #858585;
}

/* title bar */
.titlebar {
    flex: none;
    display: flex;
    align-items: center;
    height: 42px;
    background-color: #d9dfde;
}

.brand {
    width: 86px;
    padding-left: 3px;
    font-family: Inter, sans-serif;
    font-size: 26px;
    line-height: 32px;
    color: #4b4f50;
}

.brand sup {
    font-size: 10px;
    line-height: 0;
    vertical-align: 10px;
}

.quick {
    display: flex;
    align-items: center;
    gap: 12px;
    padding: 0 6px 0 5px;
}

.quick button,
.split {
    display: flex;
    align-items: center;
    gap: 10px;
}

.quick.second {
    gap: 11px;
    padding: 0 6px;
}

.pick {
    display: flex;
    align-items: center;
    height: 36px;
    border: 1px solid #a9adad;
    background-color: #e0e2e4;
}

.pick span {
    display: flex;
    align-items: center;
    height: 34px;
    padding: 0 5px;
    border-right: 1px solid #a9adad;
}

.pick .caret {
    margin: 0 5px;
}

.custom {
    display: flex;
    align-items: center;
    height: 36px;
    padding-left: 10px;
    border-left: 1px solid #a0a5a5;
}

.title {
    flex: 1;
    margin: 0;
    padding-right: 320px;
    text-align: center;
    font-size: 20px;
    font-weight: 400;
    color: #b2b6b6;
}

/* ribbon tabs */
.tabs {
    flex: none;
    display: flex;
    height: 41px;
    background-color: #3d4546;
}

.tab {
    padding: 2px 34px 0 33px;
    font-size: 20px;
    color: #fff;
}

.tab.file {
    padding: 2px 30px 0 17px;
    background: linear-gradient(160deg, #66d23f, #4fa632);
}

.tab.active {
    background-color: #f8f9fb;
    color: #3b7d22;
}

/* ribbon */
.ribbon {
    flex: none;
    display: flex;
    height: 165px;
    padding-top: 2px;
    background-color: #f8f9fb;
    border-bottom: 1px solid #b0b9b9;
}

.group {
    display: flex;
    flex-direction: column;
    padding: 0 10px;
    border-right: 1px solid #b3b8b8;
}

.group.first {
    padding-left: 0;
}

.tools {
    display: flex;
    gap: 12px;
    height: 122px;
}

.first .tools {
    gap: 6px;
}

.col {
    display: flex;
    flex-direction: column;
}

.col.ruled {
    margin-left: -2px;
    padding-left: 10px;
    border-left: 1px solid #b3b8b8;
}

.small {
    display: flex;
    align-items: center;
    gap: 6px;
    height: 40px;
}

.small .caret {
    margin-left: 4px;
}

.small:disabled {
    color: #aeb0b2;
    cursor: default;
}

.big {
    display: flex;
    flex-direction: column;
    align-items: center;
    gap: 14px;
    width: 72px;
    height: 122px;
    padding-top: 6px;
}

.big.narrow {
    width: 48px;
}

.big.pressed {
    width: 85px;
    margin-left: -10px;
    border: 1px solid #b0b2b3;
    background-color: #dfe0e2;
}

.letters {
    display: flex;
    height: 48px;
    font-family: "Liberation Sans", sans-serif;
    font-size: 36px;
    line-height: 33px;
    color: #484848;
}

.letters b {
    font-weight: 400;
}

.letters .serif {
    margin-left: -18px;
    font-family: "Liberation Serif", serif;
    font-weight: 700;
    font-size: 54px;
    line-height: 56px;
    color: #1f94c8;
}

.caption {
    display: flex;
    align-items: center;
    justify-content: center;
    gap: 7px;
    height: 40px;
    padding-top: 2px;
}

/* work area */
.work {
    flex: 1;
    display: flex;
    min-height: 0;
}

.side {
    flex: none;
    display: flex;
    flex-direction: column;
    width: 406px;
    background-color: #f8f9fb;
    border-right: 4px solid #d9dfde;
}

.drawing-pane {
    height: 632px;
    margin-right: 7px;
    border-bottom: 4px solid #d9dfde;
}

.side-tabs {
    display: flex;
    height: 38px;
    margin-right: -7px;
    background-color: #d9dfde;
}

.side-tab {
    display: flex;
    align-items: center;
    padding: 0 12px;
}

.side-tab.on {
    width: 34px;
    margin-right: -2px;
    padding: 0 3px;
    background-color: #f8f9fb;
}

.side-tools {
    display: flex;
    align-items: center;
    gap: 10px;
    height: 48px;
    padding-left: 8px;
}

.side-tools button {
    display: flex;
    align-items: center;
}

.grip {
    width: 4px;
    height: 24px;
    background: radial-gradient(circle, #b5b8b8 2px, transparent 2px) 0 0 / 4px 6px;
}

.side-tools .gap-left {
    margin-left: 21px;
}

.rule {
    width: 1px;
    height: 36px;
    margin: 0 2px;
    background-color: #b3b8b8;
}

.side-tools .held {
    justify-content: center;
    width: 36px;
    height: 36px;
    margin: 0 -5px;
    border: 1px solid #b0b2b3;
    background-color: #dfe0e2;
}

.side-tools .more {
    font-size: 22px;
    font-weight: 600;
}

.side-tools .last {
    margin-left: auto;
}

.pane:last-child .side-tools {
    margin-right: 7px;
}

.tree {
    margin: 0;
    padding: 0;
    list-style: none;
}

.pane:last-child .tree {
    margin-top: 2px;
}

.tree li {
    display: flex;
    align-items: center;
    gap: 7px;
    height: 30px;
    padding-left: 33px;
}

.tree .root {
    padding-left: 3px;
}

.tree .parent {
    padding-left: 12px;
}

.tree .parent::before {
    content: "";
    margin-right: 4px;
    border: 6px solid transparent;
    border-left: 10px solid #858585;
    border-right: none;
}

/* drawing sheet */
.canvas {
    flex: 1;
    min-width: 0;
    position: relative;
    background-color: #e9eaee;
}

.view-tools {
    position: absolute;
    top: 7px;
    left: 933px;
    display: flex;
    align-items: center;
    gap: 14px;
    height: 46px;
    padding: 0 10px;
    border: 1px solid #a3a6a8;
    background-color: #f8f9fb;
}

.view-tools .cornered {
    margin-right: -4px;
}

.sheet {
    display: block;
    width: 100%;
}

.part {
    fill: none;
    stroke: #0054a0;
    stroke-width: 1;
}

.dim {
    fill: none;
    stroke: #380060;
    stroke-width: 1;
}

.value {
    font-family: Roboto, sans-serif;
    font-weight: 100;
    font-size: 53px;
    fill: #380060;
}

.value .dia {
    font-family: "Liberation Sans", sans-serif;
    font-weight: 400;
    font-size: 52px;
}

.mark {
    fill: none;
    stroke: #ed1c24;
    stroke-width: 7;
}

.note {
    font-family: "Noto Sans CJK SC", sans-serif;
    font-size: 132px;
    fill: #ed1c24;
}

.cloud {
    position: absolute;
    top: 474px;
    right: 0;
    width: 47px;
    height: 56px;
    padding-left: 11px;
    border-radius: 12px 0 0 12px;
    background: linear-gradient(45deg, #66b2fb, #4a90f7 60%);
}

.cloud svg {
    display: block;
    width: 32px;
    height: 24px;
    fill: none;
    stroke: #fff;
    stroke-width: 4;
}

.ime {
    position: absolute;
    right: 0;
    bottom: 10px;
    display: flex;
    align-items: center;
    width: 136px;
    height: 46px;
    padding-left: 14px;
    border-radius: 10px 0 0 10px;
    background-color: #fff;
    box-shadow: 0 0 6px rgba(0, 0, 0, 0.2);
    font-size: 25px;
    font-weight: 500;
    color: #111;
}

.sogou {
    width: 28px;
    height: 24px;
    margin-right: 12px;
    fill: #f0731d;
}

.ime button:first-of-type {
    height: 28px;
    padding-left: 13px;
    border-left: 1px solid #ccc;
}

.ime .punct {
    padding-left: 18px;
    font-weight: 700;
}
```
